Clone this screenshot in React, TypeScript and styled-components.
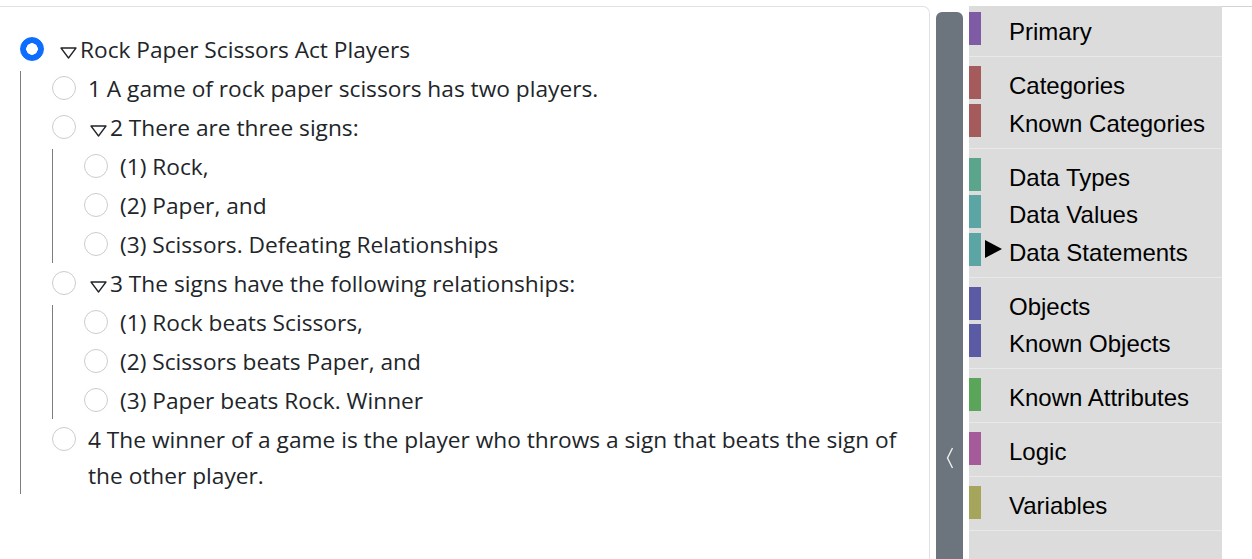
import React from "react";
import styled, { createGlobalStyle } from "styled-components";

const Global = createGlobalStyle`
  html, body { margin: 0; padding: 0; background: #fff; overflow: hidden; }
  #root { height: 559px; }
`;

const Page = styled.div`
  display: flex;
  height: 559px;
  align-items: stretch;
`;

const Card = styled.div`
  width: 930px;
  flex-shrink: 0;
  margin-top: 6px;
  border: 1px solid #dee2e6;
  border-left: none;
  border-bottom: none;
  border-top-right-radius: 7px;
  padding: 25px 20px 0 20px;
  box-sizing: border-box;
  font-family: "Open Sans", "Noto Sans", sans-serif;
  font-size: 22.7px;
  color: #212529;
`;

const NodeList = styled.div`
  display: flex;
  flex-direction: column;
  gap: 3px;
`;

const Row = styled.div`
  display: flex;
  align-items: flex-start;
  line-height: 36px;
`;

const Radio = styled.span<{ $checked?: boolean }>`
  flex-shrink: 0;
  width: 24px;
  height: 24px;
  margin-top: 5px;
  border-radius: 50%;
  box-sizing: border-box;
  border: 1px solid ${(p) => (p.$checked ? "#0d6efd" : "#c9cdd1")};
  background: ${(p) =>
    p.$checked
      ? "radial-gradient(circle, #fff 0 5.5px, #0d6efd 6px)"
      : "#fff"};
`;

const Label = styled.div<{ $gap: number }>`
  margin-left: ${(p) => p.$gap}px;
  max-width: 830px;
`;

const Caret = styled.svg`
  width: 17px;
  height: 12px;
  margin-right: 3px;
  vertical-align: -1px;
`;

const Children = styled(NodeList)`
  margin-top: 3px;
  border-left: 1px solid #7d7d7d;
  padding-left: 31px;
`;

const Rail = styled.div`
  width: 27px;
  flex-shrink: 0;
  margin: 12px 6px 0 6px;
  background: #6c757d;
  border-radius: 6px 6px 0 0;
  display: flex;
  justify-content: center;
  padding-top: 435px;
  box-sizing: border-box;
`;

const Chevron = styled.svg`
  width: 8px;
  height: 22px;
`;

const Side = styled.div`
  width: 253px;
  flex-shrink: 0;
  margin-top: 6px;
  background: #dcdcdc;
  font-family: "Liberation Sans", Arial, sans-serif;
  font-size: 24px;
  color: #000;
`;

const Rest = styled.div`
  flex: 1;
  margin-top: 6px;
  border-top: 1px solid #d2d2d2;
`;

const Group = styled.div<{ $first?: boolean }>`
  display: flex;
  flex-direction: column;
  gap: 4.5px;
  padding: ${(p) => (p.$first ? 6 : 9)}px 0 11px 0;
  border-bottom: 1px solid #e9e9e9;
`;

const Item = styled.div`
  display: flex;
  height: 33px;
`;

const Bar = styled.span<{ $color: string }>`
  width: 12px;
  flex-shrink: 0;
  background: ${(p) => p.$color};
`;

const Mark = styled.span`
  width: 28px;
  flex-shrink: 0;
  display: flex;
  align-items: center;
  padding-left: 4px;
  box-sizing: border-box;
`;

const ItemText = styled.span`
  padding-top: 7px;
  line-height: 26px;
  white-space: nowrap;
`;

type TreeNode = {
  text: string;
  checked?: boolean;
  children?: TreeNode[];
};

const tree: TreeNode = {
  text: "Rock Paper Scissors Act Players",
  checked: true,
  children: [
    { text: "1 A game of rock paper scissors has two players." },
    {
      text: "2 There are three signs:",
      children: [
        { text: "(1) Rock," },
        { text: "(2) Paper, and" },
        { text: "(3) Scissors. Defeating Relationships" },
      ],
    },
    {
      text: "3 The signs have the following relationships:",
      children: [
        { text: "(1) Rock beats Scissors," },
        { text: "(2) Scissors beats Paper, and" },
        { text: "(3) Paper beats Rock. Winner" },
      ],
    },
    {
      text: "4 The winner of a game is the player who throws a sign that beats the sign of the other player.",
    },
  ],
};

const CaretIcon = () => (
  <Caret viewBox="0 0 17 12">
    <polygon points="1,1 16,1 8.5,11" fill="none" stroke="#212529" strokeWidth="1.3" strokeLinejoin="round" />
  </Caret>
);

const Node: React.FC<{ node: TreeNode; depth: number }> = ({ node, depth }) => {
  const hasKids = !!node.children;
  const gap = depth === 0 ? 16 : hasKids ? 14 : 12;
  return (
    <div>
      <Row>
        <Radio $checked={node.checked} />
        <Label $gap={gap}>
          {hasKids && <CaretIcon />}
          {node.text}
        </Label>
      </Row>
      {hasKids && (
        <Children>
          {node.children!.map((c, i) => (
            <Node key={i} node={c} depth={depth + 1} />
          ))}
        </Children>
      )}
    </div>
  );
};

type Entry = { label: string; color: string; marked?: boolean };

const groups: Entry[][] = [
  [{ label: "Primary", color: "#7f5ba5" }],
  [
    { label: "Categories", color: "#a55b5b" },
    { label: "Known Categories", color: "#a55b5b" },
  ],
  [
    { label: "Data Types", color: "#5ba58c" },
    { label: "Data Values", color: "#5ba5a5" },
    { label: "Data Statements", color: "#5ba5a5", marked: true },
  ],
  [
    { label: "Objects", color: "#5b5ba5" },
    { label: "Known Objects", color: "#5b5ba5" },
  ],
  [{ label: "Known Attributes", color: "#5ba55b" }],
  [{ label: "Logic", color: "#a55b99" }],
  [{ label: "Variables", color: "#a5a55b" }],
];

export default function App() {
  return (
    <>
      <Global />
      <Page>
        <Card>
          <Node node={tree} depth={0} />
        </Card>
        <Rail>
          <Chevron viewBox="0 0 8 22">
            <polyline points="6.5,1 1.5,11 6.5,21" fill="none" stroke="#f0f0f0" strokeWidth="1.4" />
          </Chevron>
        </Rail>
        <Side>
          {groups.map((g, gi) => (
            <Group key={gi} $first={gi === 0}>
              {g.map((e) => (
                <Item key={e.label}>
                  <Bar $color={e.color} />
                  <Mark>
                    {e.marked && (
                      <svg width="17" height="18" viewBox="0 0 17 18">
                        <polygon points="0,0 17,9 0,18" fill="#000" />
                      </svg>
                    )}
                  </Mark>
                  <ItemText>{e.label}</ItemText>
                </Item>
              ))}
            </Group>
          ))}
        </Side>
        <Rest />
      </Page>
    </>
  );
}
